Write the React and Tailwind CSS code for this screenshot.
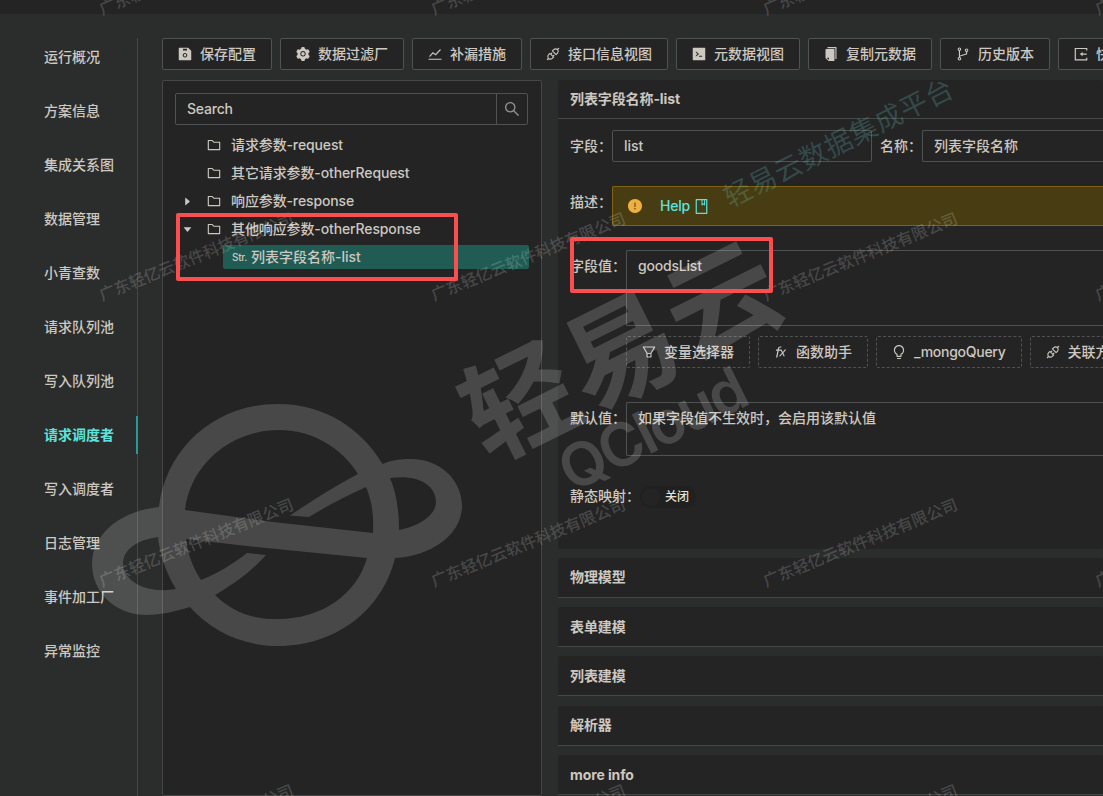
// src/App.jsx
import React from "react";
import {
  AiFillSave,
  AiFillSetting,
  AiOutlineApi,
  AiFillCode,
  AiFillCopy,
  AiOutlineBranches,
  AiOutlineSearch,
  AiOutlineFolder,
  AiFillCaretRight,
  AiFillCaretDown,
  AiFillExclamationCircle,
  AiOutlineBook,
  AiOutlineFunction,
  AiOutlineBulb,
  AiOutlineFilter,
} from "react-icons/ai";

// zigzag line over a flat base line
function TrendIcon({ size, className }) {
  return (
    <svg
      width={size}
      height={size}
      viewBox="0 0 16 16"
      className={className}
      fill="none"
      stroke="currentColor"
      strokeWidth="1.1"
    >
      <path d="M1.500 13.300h13M2.500 10.600l3.400-3.800 2.700 1.900 4.900-5.200" />
    </svg>
  );
}

// open box with an arrow coming in from the right
function ImportIcon({ size, className }) {
  return (
    <svg
      width={size}
      height={size}
      viewBox="0 0 16 16"
      className={className}
      fill="none"
      stroke="currentColor"
      strokeWidth="1.2"
    >
      <path d="M13.700 4.500V2.500H2.300v11.300h11.400v-2M13.700 8.100H9" />
      <path d="M6.800 8.100L9.600 6v4.200z" fill="currentColor" stroke="none" />
    </svg>
  );
}

const menus = [
  "运行概况",
  "方案信息",
  "集成关系图",
  "数据管理",
  "小青查数",
  "请求队列池",
  "写入队列池",
  "请求调度者",
  "写入调度者",
  "日志管理",
  "事件加工厂",
  "异常监控",
];

const toolbar = [
  { icon: AiFillSave, label: "保存配置" },
  { icon: AiFillSetting, label: "数据过滤厂" },
  { icon: TrendIcon, label: "补漏措施" },
  { icon: AiOutlineApi, label: "接口信息视图" },
  { icon: AiFillCode, label: "元数据视图" },
  { icon: AiFillCopy, label: "复制元数据" },
  { icon: AiOutlineBranches, label: "历史版本" },
  { icon: ImportIcon, label: "快速导入" },
];

const tree = [
  { label: "请求参数-request" },
  { label: "其它请求参数-otherRequest" },
  { label: "响应参数-response", caret: AiFillCaretRight },
  { label: "其他响应参数-otherResponse", caret: AiFillCaretDown },
];

const helpers = [
  { icon: AiOutlineFilter, label: "变量选择器" },
  { icon: AiOutlineFunction, label: "函数助手" },
  { icon: AiOutlineBulb, label: "_mongoQuery" },
  { icon: AiOutlineApi, label: "关联方案" },
];

const panels = ["物理模型", "表单建模", "列表建模", "解析器", "more info"];

function Sidebar() {
  return (
    <nav className="w-[138px] shrink-0 border-r border-[#454746]">
      {menus.map((item) => (
        <div
          key={item}
          className={`h-[38px] mb-4 pl-11 -mr-px flex items-center border-r-2 ${
            item === "请求调度者"
              ? "border-[#279997] text-[#5be3dd] font-bold"
              : "border-transparent"
          }`}
        >
          {item}
        </div>
      ))}
    </nav>
  );
}

function TreePanel() {
  return (
    <section className="w-[380px] shrink-0 bg-[#242424] border border-[#454746] rounded-xs p-3">
      <div className="flex w-[353px] h-8 border border-[#505251] rounded-xs">
        <div className="flex-1 px-[11px] flex items-center tracking-[-0.2px]">Search</div>
        <div className="w-[31px] border-l border-[#505251] flex items-center justify-center text-[#92908c]">
          <AiOutlineSearch size={18} />
        </div>
      </div>

      <div className="pt-1.5">
        {tree.map(({ label, caret: Caret }) => (
          <div key={label} className="h-7 flex items-center tracking-[-0.12px]">
            <span className="w-6 mr-2 flex justify-center">
              {Caret && <Caret size={11} />}
            </span>
            <AiOutlineFolder size={16} className="-ml-px mr-[9px]" />
            {label}
          </div>
        ))}
        <div className="mt-0.5 ml-12 w-[306px] h-6 px-[9px] flex items-center rounded-xs bg-[#205c53]">
          <span className="w-[19px] text-[10px] tracking-[-0.3px]">Str.</span>
          列表字段名称-list
        </div>
      </div>
    </section>
  );
}

function FieldPanel() {
  return (
    <section className="h-[468.6px] bg-[#242424] rounded-xs">
      <h2 className="h-[39px] px-3 flex items-center border-b border-[#454746] font-bold tracking-[-0.1px]">
        列表字段名称-list
      </h2>

      <div className="pl-3 pt-[11px]">
        <div className="flex">
          <label className="w-[42px] leading-8">字段：</label>
          <div className="w-[260px] h-8 px-[11px] flex items-center border border-[#505251] rounded-xs">
            list
          </div>
          <label className="w-[42px] ml-2 leading-8">名称：</label>
          <div className="flex-1 h-8 px-[11px] flex items-center border border-r-0 border-[#505251] rounded-l-xs">
            列表字段名称
          </div>
        </div>

        <div className="mt-6 flex">
          <label className="w-[42px] leading-8">描述：</label>
          <div className="flex-1 h-10 px-3.5 flex items-center border border-r-0 border-[#806210] bg-[#483d12] rounded-l-xs text-[#5be3dd]">
            <AiFillExclamationCircle size={16} className="mr-[17px] text-[#efb041]" />
            <span className="tracking-[-0.2px]">Help</span>
            <AiOutlineBook size={17} className="ml-[3px]" />
          </div>
        </div>

        <div className="mt-6 flex">
          <label className="w-14 leading-8">字段值：</label>
          <div className="flex-1 h-[76px] px-[11px] pt-1 border border-r-0 border-[#505251] rounded-l-xs leading-[22px] tracking-[-0.2px]">
            goodsList
          </div>
        </div>

        <div className="mt-2.5 ml-14 flex gap-2">
          {helpers.map(({ icon: Icon, label }) => (
            <button
              key={label}
              className={`h-8 px-[15px] shrink-0 flex items-center gap-2 border border-dashed border-[#505251] rounded-xs ${
                label === "_mongoQuery" ? "tracking-[-0.27px]" : ""
              }`}
            >
              <Icon size={16} className="-m-px" />
              {label}
            </button>
          ))}
        </div>

        <div className="mt-[34px] flex">
          <label className="w-14 leading-8">默认值：</label>
          <div className="flex-1 h-[54px] px-[11px] pt-1 border border-r-0 border-[#505251] rounded-l-xs leading-[22px]">
            如果字段值不生效时，会启用该默认值
          </div>
        </div>

        <div className="mt-6 flex items-center">
          <label className="w-[70px] leading-8">静态映射：</label>
          <div className="mt-0.5 w-14 h-[22px] p-0.5 flex items-center rounded-full bg-[#202020]">
            <span className="size-[18px] mr-[5px] rounded-full bg-[#242424]" />
            <span className="text-xs text-[#e6e1d9]">关闭</span>
          </div>
        </div>
      </div>
    </section>
  );
}

// repeated company name, one tile every 332 x 286
function Watermark() {
  const xs = [102, 434, 766, 1098];
  const ys = [15, 301, 587, 873];
  return (
    <svg
      className="absolute inset-0 pointer-events-none"
      width="1103"
      height="796"
      viewBox="0 0 1103 796"
    >
      <g fill="#fff" fillOpacity="0.18" fontSize="16">
        {ys.map((y) =>
          xs.map((x) => (
            <text key={`${x}-${y}`} transform={`translate(${x} ${y}) rotate(-22)`}>
              广东轻亿云软件科技有限公司
            </text>
          ))
        )}
      </g>

      {/* planet logo */}
      <path
        fill="#fff"
        fillOpacity="0.17"
        fillRule="evenodd"
        d="M159 507C166 449 214 404 278 404C324 404 361 428 382.500 464C391 460 401 459 411 459C440 459 462 480 462 506C462 534 432 556 395 558C382 611 335 646 278 646C244 646 212 632 190 607C174 612 159 615 145 615C114 614 92 592 92 563C93 534 120 511 159 507ZM185 510L273 522L373 533C374 516 372 501 366 487C344 497 325 507 309 517L290 515.500C313 500 335 486 358 474C341 447 312 430 279 430C229 430 190 466 185 510ZM390 478C396 492 399 509 399 530C420 526 436 515 436 502C436 485 418 474 390 478ZM186 539C188 555 193 568 201 580C219 573 234 563 247 553L266 555C251 572 234 584 215 595C231 611 253 620 278 619C322 619 357 594 367 558L247 546ZM158 537C136 540 123 550 123 564C124 582 147 594 176 589C166 573 160 555 158 537Z"
      />

      {/* brand name */}
      <g fill="#fff" fillOpacity="0.17">
        <text
          transform="translate(488 463) rotate(-26.500)"
          fontSize="112"
          fontWeight="700"
          letterSpacing="1"
        >
          轻易云
        </text>
        <text
          transform="translate(572 493) rotate(-26.500)"
          fontSize="60"
          fontWeight="600"
          textLength="202"
        >
          QCloud
        </text>
      </g>
      <text
        transform="translate(730 208) rotate(-26.500)"
        fill="#6fd5d3"
        fillOpacity="0.22"
        fontSize="27.500"
        fontWeight="400"
        textLength="252"
      >
        轻易云数据集成平台
      </text>
    </svg>
  );
}

export default function App() {
  return (
    <div className="relative w-[1103px] h-[796px] overflow-hidden flex flex-col bg-[#2b2d2c] text-[#cdc8c1] text-sm font-medium font-['Inter','Noto_Sans_CJK_SC',sans-serif]">
      <header className="h-3.5 shrink-0 bg-[#242424]" />

      <div className="flex-1 min-h-0 pt-6 flex">
        <Sidebar />

        <main className="flex-1 min-w-0 pl-6 flex flex-col">
          <div className="flex gap-2 mb-2.5">
            {toolbar.map(({ icon: Icon, label }) => (
              <button
                key={label}
                className="h-8 px-[15px] shrink-0 flex items-center gap-2 bg-[#242424] border border-[#505251] rounded-xs"
              >
                <Icon size={16} className="-m-px" />
                {label}
              </button>
            ))}
          </div>

          <div className="flex-1 min-h-0 flex gap-4">
            <TreePanel />

            <div className="flex-1 min-w-0">
              <FieldPanel />
              {panels.map((name) => (
                <div
                  key={name}
                  className="mt-[9.3px] h-10 px-3 flex items-center bg-[#242424] border-b border-[#454746] rounded-t-xs font-bold tracking-[-0.1px]"
                >
                  {name}
                </div>
              ))}
            </div>
          </div>
        </main>
      </div>

      <Watermark />

      {/* highlight frames */}
      <div className="absolute left-[176px] top-[213px] w-[282px] h-[68px] border-4 border-[#fb4f4f] rounded-xs" />
      <div className="absolute left-[570px] top-[237px] w-[203px] h-14 border-4 border-[#fb4f4f] rounded-xs" />
    </div>
  );
}
